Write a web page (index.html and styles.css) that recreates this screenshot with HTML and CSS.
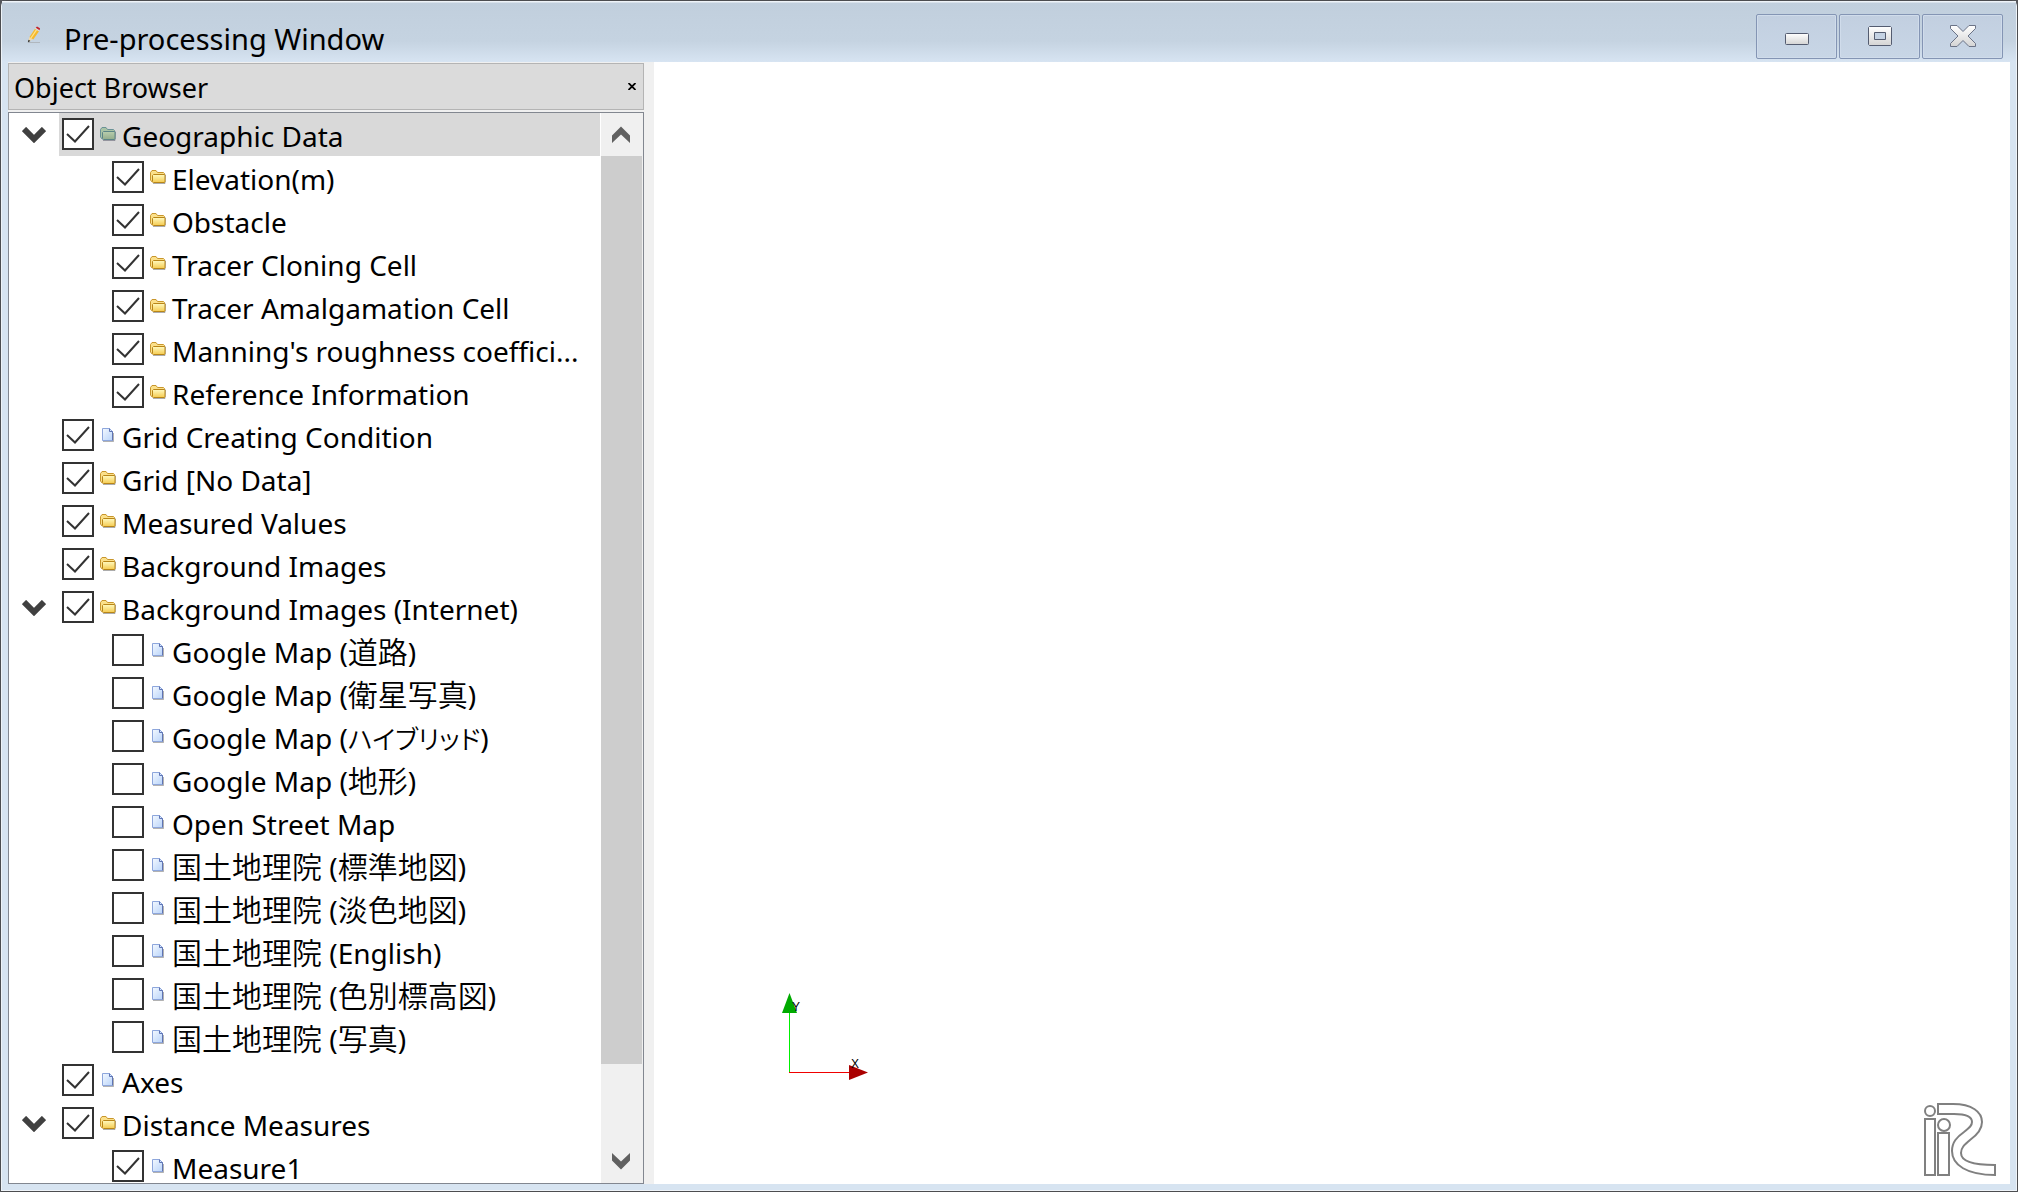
FILE: index.html
```html
<!DOCTYPE html>
<html lang="en">
<head>
<meta charset="utf-8">
<title>Pre-processing Window</title>
<link rel="stylesheet" href="styles.css">
</head>
<body>
<svg class="defs" aria-hidden="true">
  <defs>
    <linearGradient id="gold" x1="0" y1="0" x2="0" y2="1"><stop offset="0" stop-color="#fffac0"/><stop offset="1" stop-color="#f5cb50"/></linearGradient>
    <linearGradient id="sage" x1="0" y1="0" x2="0" y2="1"><stop offset="0" stop-color="#b9cfae"/><stop offset="1" stop-color="#93ac8c"/></linearGradient>
    <linearGradient id="sky" x1="0" y1="0" x2="1" y2="1"><stop offset="0" stop-color="#f4f9ff"/><stop offset="1" stop-color="#b9d4fa"/></linearGradient>
    <linearGradient id="silver" x1="0" y1="0" x2="0" y2="1"><stop offset="0" stop-color="#ffffff"/><stop offset="1" stop-color="#d4d4d4"/></linearGradient>
    <symbol id="folder" viewBox="0 0 16 16">
      <path d="M3 14.500h12l.5-9" fill="none" stroke="#777" stroke-opacity=".6"/>
      <path d="M.5 10.500V3.500L2 1.500h4l1.500 2h6l1 1v2" fill="#fbe08a" stroke="#c8962c"/>
      <path d="M.5 4v7l2 2.500" fill="#fbe08a" stroke="#c8962c"/>
      <path d="M3.500 5.500h11l.5.5v7l-.5.5h-11l-1-1v-6z" fill="url(#gold)" stroke="#b98618"/>
    </symbol>
    <symbol id="folder-selected" viewBox="0 0 16 16">
      <path d="M3 14.500h12l.5-9" fill="none" stroke="#667" stroke-opacity=".6"/>
      <path d="M.5 10.500V3.500L2 1.500h4l1.500 2h6l1 1v2" fill="#a9c3a5" stroke="#6a9296"/>
      <path d="M.5 4v7l2 2.500" fill="#a9c3a5" stroke="#6a9296"/>
      <path d="M3.500 5.500h11l.5.5v7l-.5.5h-11l-1-1v-6z" fill="url(#sage)" stroke="#5b8586"/>
    </symbol>
    <symbol id="page" viewBox="0 0 16 16">
      <path d="M3 14.500h10.500V6" fill="none" stroke="#666" stroke-opacity=".5"/>
      <path d="M2.500 1.500h7l3 3v9h-10z" fill="url(#sky)" stroke="#8da6dc"/>
      <path d="M9.500 1.500v3h3v9" fill="none" stroke="#5f74b4"/>
    </symbol>
    <symbol id="chevron" viewBox="0 0 24 16">
      <path d="M2 2l10 10L22 2" fill="none" stroke="#404040" stroke-width="6"/>
    </symbol>
  </defs>
</svg>
<div class="window">
  <header class="titlebar">
    <svg class="app-icon" viewBox="0 0 16 18" aria-hidden="true">
      <path d="M1 16.500h12" stroke="#999" stroke-opacity=".5" stroke-width="1"/>
      <path d="M1 16l1.500-5 3.500 2z" fill="#f4d9a4"/>
      <path d="M.8 16.200l.8-2.500 1.800 1.200z" fill="#222"/>
      <path d="M2.500 11L8 2.800l4 2.400L6.300 13.500z" fill="#f6b92c"/>
      <path d="M4 12L9.500 3.800" stroke="#ffe28a" stroke-width="1.300"/>
      <path d="M8 2.800l1-1.600 4 2.400-1 1.600z" fill="#ddd"/>
      <path d="M8.700 1.700L10 .5l3 1.700-.4 2z" fill="#c3242c"/>
    </svg>
    <h1 class="title">Pre-processing Window</h1>
    <div class="controls">
      <button class="control" type="button" aria-label="Minimize"><svg width="26" height="24" viewBox="0 0 26 24"><rect x="1.500" y="8.500" width="23" height="11" rx="1" fill="url(#silver)" stroke="#545c70"/></svg></button>
      <button class="control" type="button" aria-label="Maximize"><svg width="26" height="24" viewBox="0 0 26 24"><path fill-rule="evenodd" d="M2.500 1.500h21l1 1v17l-1 1h-21l-1-1v-17zM7.500 7.500v7h11v-7z" fill="url(#silver)" stroke="#545c70"/></svg></button>
      <button class="control" type="button" aria-label="Close"><svg width="28" height="24" viewBox="0 0 28 24"><path d="M1.500.5H8l6 6 6-6h6.500v3L19 11l7.500 7.500v3H20l-6-6-6 6H1.500v-3L9 11 1.500 3.500z" fill="url(#silver)" stroke="#6b7386"/></svg></button>
    </div>
  </header>
  <main class="content">
    <aside class="browser">
      <div class="panel-head">
        <h2 class="panel-title">Object Browser</h2>
        <button class="panel-close" type="button" aria-label="Close panel"><svg width="8" height="7" viewBox="0 0 8 7"><path d="M.5 0l7 7M7.500 0l-7 7" stroke="#000" stroke-width="1.800"/></svg></button>
      </div>
      <div class="tree-frame">
        <ul class="tree">
          <li><div class="row"><button class="toggle" type="button" aria-label="Collapse"><svg><use href="#chevron"/></svg></button><label class="item selected"><input type="checkbox" checked><svg class="icon"><use href="#folder-selected"/></svg><span>Geographic Data</span></label></div>
            <ul class="branch">
              <li><label class="item"><input type="checkbox" checked><svg class="icon"><use href="#folder"/></svg><span>Elevation(m)</span></label></li>
              <li><label class="item"><input type="checkbox" checked><svg class="icon"><use href="#folder"/></svg><span>Obstacle</span></label></li>
              <li><label class="item"><input type="checkbox" checked><svg class="icon"><use href="#folder"/></svg><span>Tracer Cloning Cell</span></label></li>
              <li><label class="item"><input type="checkbox" checked><svg class="icon"><use href="#folder"/></svg><span>Tracer Amalgamation Cell</span></label></li>
              <li><label class="item"><input type="checkbox" checked><svg class="icon"><use href="#folder"/></svg><span>Manning's roughness coeffici...</span></label></li>
              <li><label class="item"><input type="checkbox" checked><svg class="icon"><use href="#folder"/></svg><span>Reference Information</span></label></li>
            </ul>
          </li>
          <li><div class="row"><label class="item"><input type="checkbox" checked><svg class="icon"><use href="#page"/></svg><span>Grid Creating Condition</span></label></div></li>
          <li><div class="row"><label class="item"><input type="checkbox" checked><svg class="icon"><use href="#folder"/></svg><span>Grid [No Data]</span></label></div></li>
          <li><div class="row"><label class="item"><input type="checkbox" checked><svg class="icon"><use href="#folder"/></svg><span>Measured Values</span></label></div></li>
          <li><div class="row"><label class="item"><input type="checkbox" checked><svg class="icon"><use href="#folder"/></svg><span>Background Images</span></label></div></li>
          <li><div class="row"><button class="toggle" type="button" aria-label="Collapse"><svg><use href="#chevron"/></svg></button><label class="item"><input type="checkbox" checked><svg class="icon"><use href="#folder"/></svg><span>Background Images (Internet)</span></label></div>
            <ul class="branch">
              <li><label class="item"><input type="checkbox"><svg class="icon"><use href="#page"/></svg><span>Google Map (<span class="ja" lang="ja">道路</span>)</span></label></li>
              <li><label class="item"><input type="checkbox"><svg class="icon"><use href="#page"/></svg><span>Google Map (<span class="ja" lang="ja">衛星写真</span>)</span></label></li>
              <li><label class="item"><input type="checkbox"><svg class="icon"><use href="#page"/></svg><span>Google Map (<span class="ja kana" lang="ja">ハイブリッド</span>)</span></label></li>
              <li><label class="item"><input type="checkbox"><svg class="icon"><use href="#page"/></svg><span>Google Map (<span class="ja" lang="ja">地形</span>)</span></label></li>
              <li><label class="item"><input type="checkbox"><svg class="icon"><use href="#page"/></svg><span>Open Street Map</span></label></li>
              <li><label class="item"><input type="checkbox"><svg class="icon"><use href="#page"/></svg><span><span class="ja" lang="ja">国土地理院</span> (<span class="ja" lang="ja">標準地図</span>)</span></label></li>
              <li><label class="item"><input type="checkbox"><svg class="icon"><use href="#page"/></svg><span><span class="ja" lang="ja">国土地理院</span> (<span class="ja" lang="ja">淡色地図</span>)</span></label></li>
              <li><label class="item"><input type="checkbox"><svg class="icon"><use href="#page"/></svg><span><span class="ja" lang="ja">国土地理院</span> (English)</span></label></li>
              <li><label class="item"><input type="checkbox"><svg class="icon"><use href="#page"/></svg><span><span class="ja" lang="ja">国土地理院</span> (<span class="ja" lang="ja">色別標高図</span>)</span></label></li>
              <li><label class="item"><input type="checkbox"><svg class="icon"><use href="#page"/></svg><span><span class="ja" lang="ja">国土地理院</span> (<span class="ja" lang="ja">写真</span>)</span></label></li>
            </ul>
          </li>
          <li><div class="row"><label class="item"><input type="checkbox" checked><svg class="icon"><use href="#page"/></svg><span>Axes</span></label></div></li>
          <li><div class="row"><button class="toggle" type="button" aria-label="Collapse"><svg><use href="#chevron"/></svg></button><label class="item"><input type="checkbox" checked><svg class="icon"><use href="#folder"/></svg><span>Distance Measures</span></label></div>
            <ul class="branch">
              <li><label class="item"><input type="checkbox" checked><svg class="icon"><use href="#page"/></svg><span>Measure1</span></label></li>
            </ul>
          </li>
        </ul>
        <div class="scrollbar">
          <button class="scroll-button" type="button" aria-label="Scroll up"><svg width="18" height="17" viewBox="0 0 18 17"><path d="M0 9.500L9 .5l9 9V17L9 8.500 0 17z" fill="#606060"/></svg></button>
          <div class="track"><div class="thumb"></div></div>
          <button class="scroll-button" type="button" aria-label="Scroll down"><svg width="18" height="17" viewBox="0 0 18 17"><path d="M0 7.500l9 9 9-9V0L9 8.500 0 0z" fill="#606060"/></svg></button>
        </div>
      </div>
    </aside>
    <section class="canvas" aria-label="Canvas">
      <svg class="axes" width="90" height="92" viewBox="0 0 90 92" role="img" aria-label="X and Y axes">
        <path d="M9.500 20v60" stroke="#00f000"/>
        <path d="M9 79.500h61" stroke="#f00000"/>
        <path d="M9.500 0L17 20H2z" fill="#00aa00"/>
        <path d="M88 79.500L69 72v15z" fill="#aa0000"/>
        <text x="12" y="18">Y</text>
        <text x="71" y="75">X</text>
      </svg>
      <svg class="logo" width="74" height="74" viewBox="0 0 74 74" role="img" aria-label="iRIC">
        <g fill="#fff" stroke="#808080" stroke-width="2">
          <path d="M15 1h15c19 0 29 8 29 18 0 8-5 13-12 18-6 5-9 8-9 13 0 8 10 12 34 12v10C44 72 29 62 29 48c0-9 5-14 12-19 5-4 8-6 8-10 0-5-6-8-18-8H15z"/>
          <circle cx="7" cy="8" r="5"/>
          <path d="M2 16h10v56H2z"/>
          <circle cx="21" cy="22" r="6"/>
          <path d="M15 30h11v42H15z"/>
        </g>
      </svg>
    </section>
  </main>
</div>
</body>
</html>
```
FILE: styles.css
```css
* {
  box-sizing: border-box;
}

body {
  margin: 0;
  background: #54555a;
  color: #000;
  font-family: "Noto Sans", "Noto Sans CJK JP", sans-serif;
  font-size: 28px;
}

button {
  padding: 0;
  border: 0;
  background: none;
}

ul {
  margin: 0;
  padding: 0;
  list-style: none;
}

svg {
  display: block;
}

.defs {
  position: absolute;
  width: 0;
  height: 0;
}

.window {
  display: flex;
  flex-direction: column;
  height: 100vh;
  padding: 0 7px 7px;
  border: 1px solid #4c4d50;
  border-radius: 6px 6px 0 0;
  background: #d7e4f1;
  box-shadow: inset 0 0 0 1px #eef3f8;
}

.titlebar {
  display: flex;
  flex: none;
  align-items: center;
  height: 61px;
  margin: 0 -6px;
  padding: 0 13px 0 25px;
  background: linear-gradient(#eef3f8 1px, #c1cfdd 2px, #c5d3e1 40px, #d7e4f2);
}

.app-icon {
  width: 16px;
  height: 18px;
  margin-top: 6px;
}

.title {
  margin: 14px 0 0 21px;
  font-size: 29px;
  font-weight: 400;
  line-height: 40px;
}

.controls {
  display: flex;
  gap: 2px;
  margin: 10px 0 0 auto;
}

.control {
  display: flex;
  align-items: center;
  justify-content: center;
  width: 81px;
  height: 45px;
  border: 1px solid #8495b4;
  border-radius: 2px;
  background: linear-gradient(#c2cfe0, #c8d6e6);
  box-shadow: inset 0 0 0 1px #d0dceb;
}

.content {
  display: flex;
  flex: 1;
  min-height: 0;
  background: #fff;
}

.browser {
  display: flex;
  flex: none;
  flex-direction: column;
  gap: 2px;
  width: 646px;
  padding: 1px 10px 0 0;
  background: #f0f0f0;
}

.panel-head {
  display: flex;
  flex: none;
  align-items: center;
  justify-content: space-between;
  height: 47px;
  padding: 0 7px 0 5px;
  border: 1px solid #b4b4b4;
  background: #dbdbdb;
}

.panel-title {
  margin: 2px 0 0;
  font-size: 27px;
  font-weight: 400;
  line-height: 40px;
}

.tree-frame {
  display: flex;
  flex: 1;
  min-height: 0;
  border: 1px solid #828790;
  background: #fff;
}

.tree {
  flex: 1;
  min-width: 0;
  overflow: hidden;
}

.row {
  display: flex;
  justify-content: flex-end;
}

.row .item {
  flex: none;
  width: calc(100% - 50px);
}

.branch {
  padding-left: 100px;
}

.toggle {
  display: flex;
  flex: 1;
  justify-content: center;
  height: 43px;
  padding-top: 14px;
}

.toggle svg {
  width: 24px;
  height: 16px;
}

.item {
  display: flex;
  height: 43px;
  padding: 5px 0 0 3px;
  line-height: 36px;
  white-space: nowrap;
}

.item.selected {
  background: #d9d9d9;
}

.item input {
  flex: none;
  width: 32px;
  height: 32px;
  margin: 0 6px 0 0;
  appearance: none;
  border: 2px solid #333;
  background: #fff;
}

.item input:checked {
  background: #fff url("data:image/svg+xml,%3Csvg xmlns='http://www.w3.org/2000/svg' viewBox='0 0 28 28'%3E%3Cpath d='M3 14l8 7.500L25 6' fill='none' stroke='%23333' stroke-width='2'/%3E%3C/svg%3E");
}

.icon {
  flex: none;
  width: 16px;
  height: 16px;
  margin: 8px 6px 0 0;
}

.ja {
  font-family: "Noto Sans CJK JP", sans-serif;
  font-size: 30px;
  font-weight: 350;
  line-height: 0;
}

.kana {
  font-size: 26px;
  font-feature-settings: "palt";
}

.scrollbar {
  display: flex;
  flex: none;
  flex-direction: column;
  width: 43px;
  padding-right: 1px;
  border-left: 1px solid #fff;
  background: #f0f0f0;
}

.scroll-button {
  display: flex;
  flex: none;
  align-items: center;
  justify-content: center;
  height: 43px;
  padding-right: 1px;
}

.track {
  flex: 1;
}

.thumb {
  height: calc(100% * 12 / 13);
  background: #cdcdcd;
}

.canvas {
  position: relative;
  flex: 1;
}

.axes {
  position: absolute;
  bottom: 99px;
  left: 126px;
  font-family: "Liberation Sans", sans-serif;
  font-size: 12px;
}

.logo {
  position: absolute;
  right: 13px;
  bottom: 7px;
}
```
